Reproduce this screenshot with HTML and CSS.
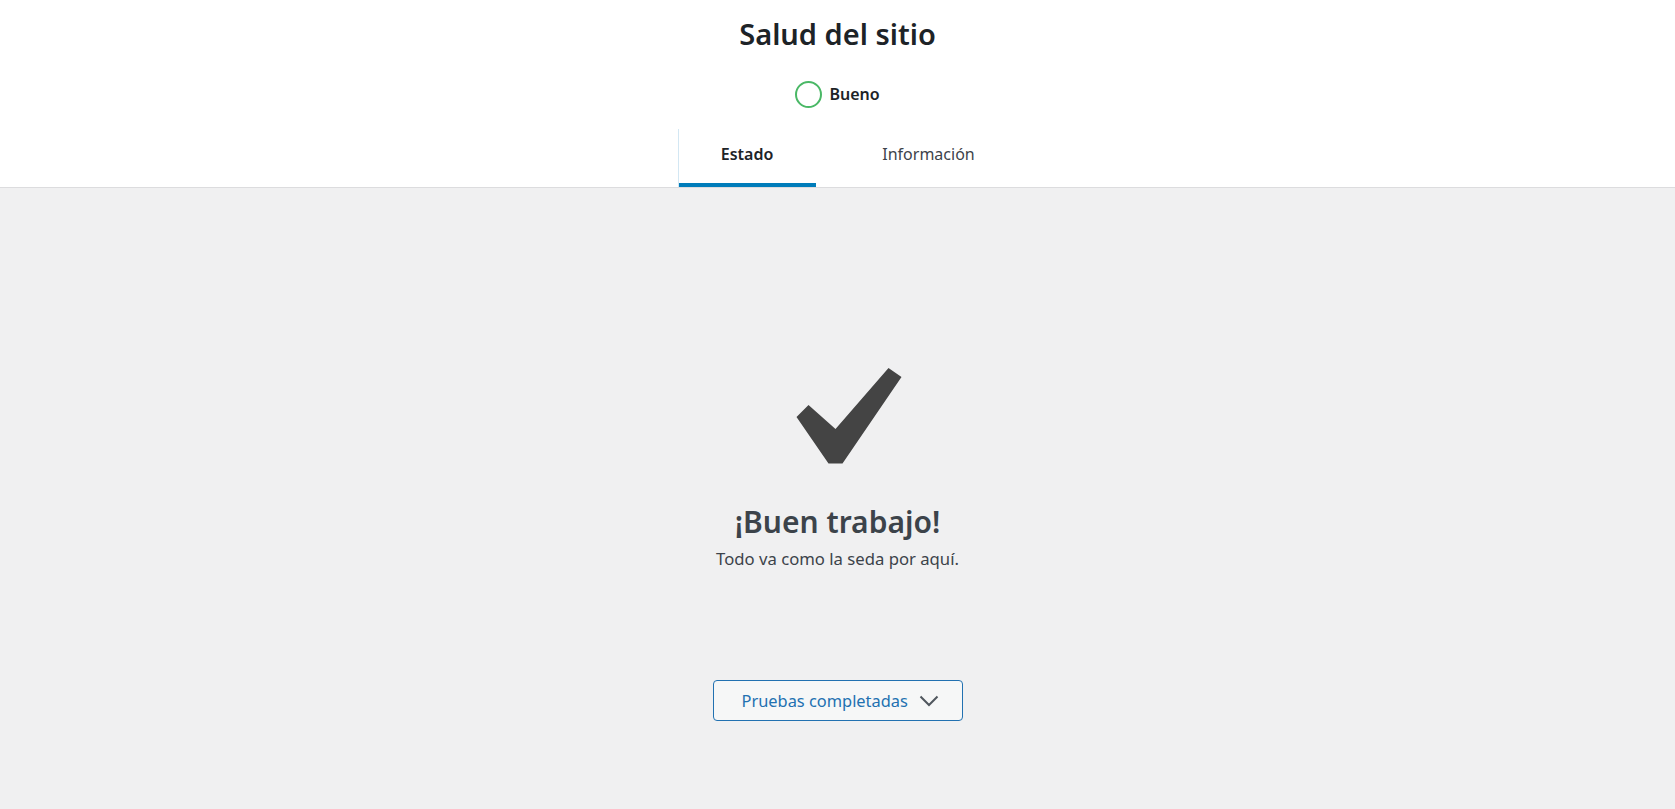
FILE: index.html
```html
<!DOCTYPE html>
<html lang="es">
<head>
    <meta charset="UTF-8">
    <meta name="viewport" content="width=device-width, initial-scale=1.0">
    <title>Salud del sitio</title>
    <link rel="stylesheet" href="styles.css">
</head>
<body>
    <div class="health-header">
        <h1>Salud del sitio</h1>

        <div class="progress">
            <span class="progress-ring"></span>
            <span class="progress-label">Bueno</span>
        </div>

        <nav class="tabs">
            <a href="#" class="tab active">Estado</a>
            <a href="#" class="tab">Información</a>
        </nav>
    </div>

    <div class="health-body">
        <!-- all clear icon -->
        <svg class="check-icon" width="150" height="96" viewBox="0 0 150 96">
            <polygon points="33.5,49 45.5,37 72.5,61 125.5,0 138.5,9 79.5,95.5 65.5,95.5" fill="#444"/>
        </svg>

        <p class="encouragement">¡Buen trabajo!</p>
        <p class="subtext">Todo va como la seda por aquí.</p>

        <button class="toggle-button">
            Pruebas completadas
            <svg width="20" height="12" viewBox="0 0 20 12">
                <polyline points="1.5,1.5 10,10 18.5,1.5" fill="none" stroke="#50575e" stroke-width="2"/>
            </svg>
        </button>
    </div>
</body>
</html>
```

FILE: styles.css
```css
body {
    font-family: "Noto Sans", "Open Sans", sans-serif;
    background-color: #f0f0f1;
    color: #3c434a;
    margin: 0;
    padding: 0;
    min-height: 100vh;
}

.health-header {
    background: #fff;
    border-bottom: 1px solid #dcdcde;
    text-align: center;
}

.health-header h1 {
    margin: 0;
    padding-top: 14px;
    font-size: 29px;
    line-height: 40px;
    font-weight: 600;
    color: #1d2327;
}

.progress {
    display: flex;
    justify-content: center;
    align-items: center;
    gap: 7px;
    height: 40px;
    margin-top: 20px;
}

.progress-ring {
    width: 23px;
    height: 23px;
    border: 2px solid #4ab866;
    border-radius: 50%;
}

.progress-label {
    font-size: 16px;
    font-weight: 600;
    color: #1d2327;
}

.tabs {
    display: flex;
    justify-content: center;
    margin-top: 15px;
}

.tab {
    display: block;
    box-sizing: border-box;
    height: 58px;
    padding: 13px 0 0;
    margin: 0 16px;
    line-height: 24px;
    font-size: 16px;
    text-decoration: none;
    color: #3c434a;
}

.tab.active {
    width: 138px;
    border-left: 1px solid #d3e7f3;
    font-weight: 600;
    color: #1d2327;
    box-shadow: inset 0 -4px #007cba;
}

.tab:not(.active) {
    width: 150px;
    padding-left: 12px;
    text-align: center;
}

.health-body {
    display: flex;
    flex-direction: column;
    align-items: center;
    padding-top: 180px;
}

.check-icon {
    display: block;
}

.encouragement {
    margin: 38px 0 0;
    font-size: 30px;
    line-height: 39px;
    font-weight: 600;
    color: #3c434a;
}

.subtext {
    margin: 6px 0 0;
    font-size: 16.7px;
    line-height: 24px;
}

.toggle-button {
    display: flex;
    align-items: center;
    justify-content: space-between;
    box-sizing: border-box;
    width: 250px;
    height: 41px;
    margin-top: 109px;
    padding: 0 23px 0 28px;
    background: #f6f7f7;
    border: 1px solid #2271b1;
    border-radius: 4px;
    font-family: inherit;
    font-size: 16.4px;
    color: #2271b1;
    cursor: pointer;
}
```
